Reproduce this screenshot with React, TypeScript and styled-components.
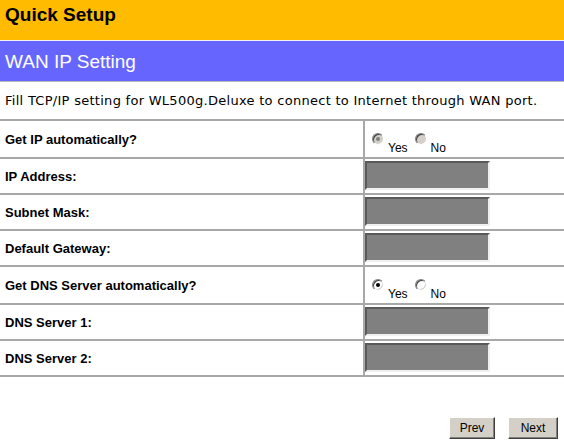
import React from "react";
import styled, { createGlobalStyle } from "styled-components";

const GlobalStyle = createGlobalStyle`
  body {
    margin: 0;
    background: #ffffff;
    font-family: "Liberation Sans", Arial, sans-serif;
  }
`;

const Page = styled.div`
  width: 564px;
`;

const TitleBar = styled.div`
  height: 41px;
  box-sizing: border-box;
  padding: 4px 5px 0;
  background: #ffbb00;
  color: #000;
  font: bold 19px/22px "Liberation Sans", Arial, sans-serif;
  border-bottom: 1px solid #f2f2f2;
`;

const SectionBar = styled.div`
  height: 41px;
  box-sizing: border-box;
  padding: 10px 5px 0;
  background: #6666ff;
  color: #fff;
  font: 19px/22px "Liberation Sans", Arial, sans-serif;
  border-bottom: 1px solid #b8b8b8;
`;

const Description = styled.div`
  height: 39px;
  box-sizing: border-box;
  display: flex;
  align-items: center;
  padding-left: 5px;
  font: 13px "DejaVu Sans", Verdana, sans-serif;
  letter-spacing: 0.28px;
  color: #000;
  border-bottom: 2px solid #a8a8a8;
`;

const Row = styled.div<{ $tall?: boolean }>`
  display: grid;
  grid-template-columns: 365px 1fr;
  height: ${(p) => (p.$tall ? 38 : 36)}px;
  box-sizing: border-box;
  border-bottom: 2px solid #a8a8a8;
`;

const Label = styled.div`
  display: flex;
  align-items: center;
  padding-left: 5px;
  border-right: 2px solid #a8a8a8;
  font: bold 13px "Liberation Sans", Arial, sans-serif;
  color: #000;
`;

const Field = styled.div`
  display: flex;
  align-items: flex-start;
  padding-top: 2px;
`;

const RadioField = styled.div`
  display: flex;
  align-items: flex-start;
  padding-left: 7px;
`;

const Option = styled.label`
  display: flex;
  align-items: flex-start;
  margin-right: 7px;
  font: 12px/14px "Liberation Sans", Arial, sans-serif;
  color: #000;
`;

const Radio = styled.span<{ $checked?: boolean; $disabled?: boolean }>`
  position: relative;
  width: 12px;
  height: 12px;
  box-sizing: border-box;
  margin: 12px 4px 0 0;
  border-radius: 50%;
  background: ${(p) => (p.$disabled ? "#d4d0c8" : "#ffffff")};
  border: 1px solid;
  border-color: #808080 #ffffff #ffffff #808080;
  box-shadow: inset 1px 1px 0 #404040, inset -1px -1px 0 #d4d0c8;

  &::after {
    content: "";
    display: ${(p) => (p.$checked ? "block" : "none")};
    position: absolute;
    left: 3px;
    top: 3px;
    width: 4px;
    height: 4px;
    border-radius: 50%;
    background: ${(p) => (p.$disabled ? "#808080" : "#000000")};
  }
`;

const OptionText = styled.span`
  margin-top: 20px;
`;

const TextBox = styled.div`
  width: 125px;
  height: 29px;
  box-sizing: border-box;
  background: #808080;
  border: 2px solid;
  border-color: #5a5a5a #f0f0f0 #f0f0f0 #5a5a5a;
`;

const ButtonBar = styled.div`
  display: flex;
  justify-content: flex-end;
  gap: 13px;
  padding: 40px 6px 0;
`;

const Button = styled.button<{ $width: number }>`
  width: ${(p) => p.$width}px;
  height: 22px;
  padding: 0;
  background: #d4d0c8;
  color: #000;
  font: 12px "Liberation Sans", Arial, sans-serif;
  border: 1px solid;
  border-color: #ffffff #404040 #404040 #ffffff;
  box-shadow: inset -1px -1px 0 #808080;
`;

const RadioRow: React.FC<{ label: string; disabled?: boolean }> = ({ label, disabled }) => (
  <Row $tall>
    <Label>{label}</Label>
    <RadioField>
      <Option>
        <Radio $checked $disabled={disabled} />
        <OptionText>Yes</OptionText>
      </Option>
      <Option>
        <Radio $disabled={disabled} />
        <OptionText>No</OptionText>
      </Option>
    </RadioField>
  </Row>
);

const InputRow: React.FC<{ label: string }> = ({ label }) => (
  <Row>
    <Label>{label}</Label>
    <Field>
      <TextBox />
    </Field>
  </Row>
);

const App: React.FC = () => {
  return (
    <Page>
      <GlobalStyle />
      <TitleBar>Quick Setup</TitleBar>
      <SectionBar>WAN IP Setting</SectionBar>
      <Description>
        Fill TCP/IP setting for WL500g.Deluxe to connect to Internet through WAN port.
      </Description>
      <RadioRow label="Get IP automatically?" disabled />
      <InputRow label="IP Address:" />
      <InputRow label="Subnet Mask:" />
      <InputRow label="Default Gateway:" />
      <RadioRow label="Get DNS Server automatically?" />
      <InputRow label="DNS Server 1:" />
      <InputRow label="DNS Server 2:" />
      <ButtonBar>
        <Button $width={46}>Prev</Button>
        <Button $width={50}>Next</Button>
      </ButtonBar>
    </Page>
  );
};

export default App;
